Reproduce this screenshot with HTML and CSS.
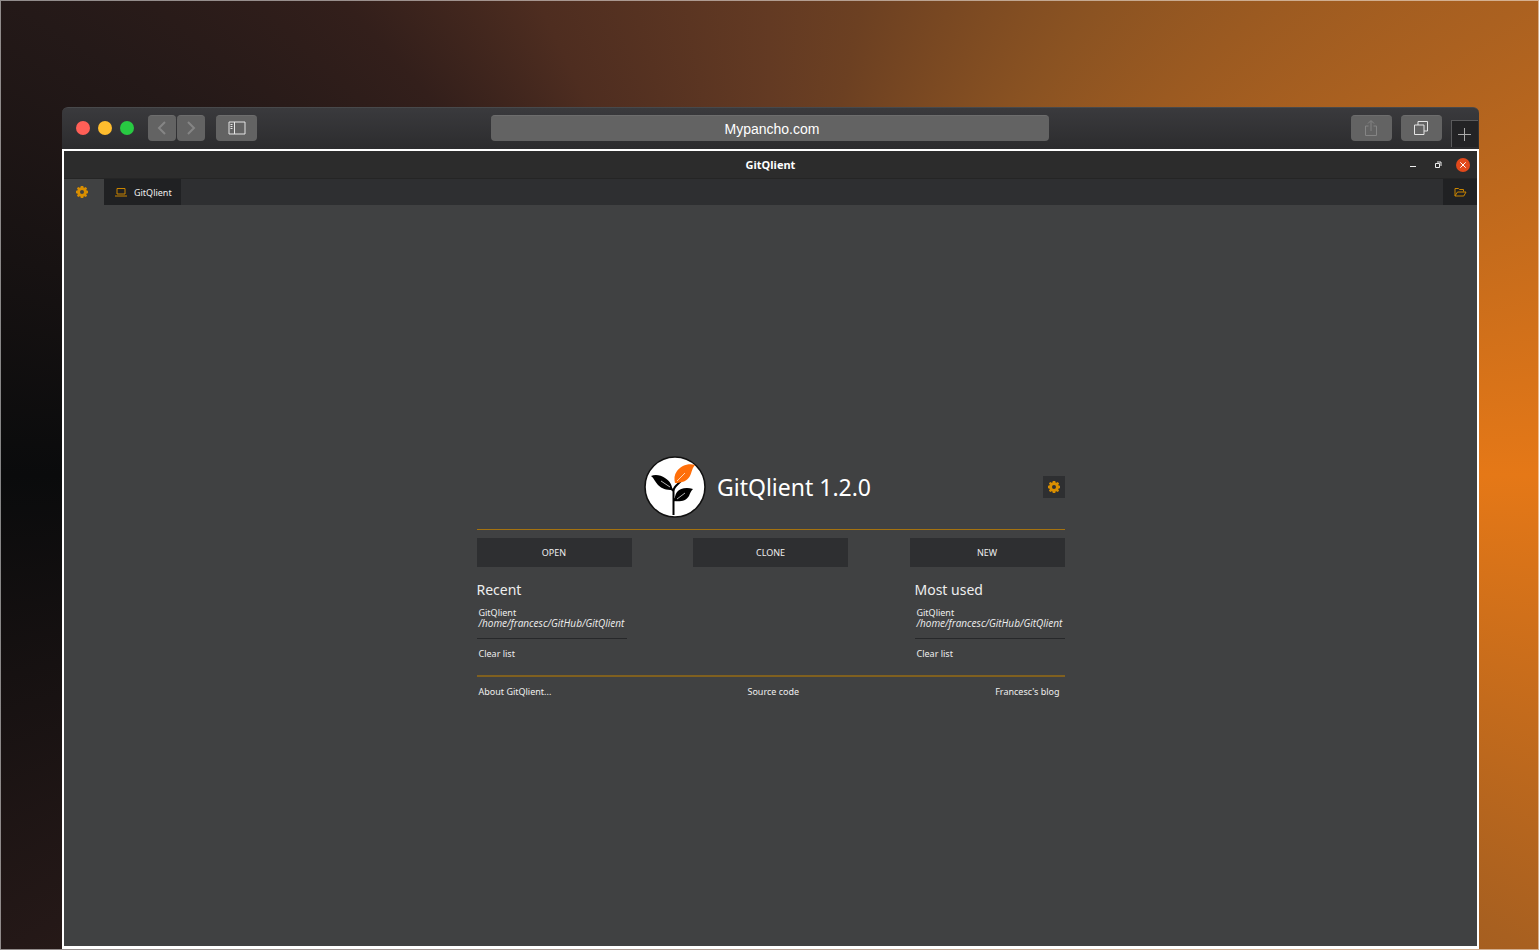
FILE: index.html
```html
<!DOCTYPE html>
<html lang="en">
<head>
<meta charset="utf-8">
<meta name="viewport" content="width=device-width, initial-scale=1">
<title>GitQlient</title>
<link rel="stylesheet" href="styles.css">
</head>
<body>
<svg class="defs" aria-hidden="true">
  <symbol id="gear" viewBox="0 0 24 24">
    <path fill-rule="evenodd" d="M9.500 0h5l.6 3 1.700.7L19.400 2l2.800 2.800L20.500 7.300l.7 1.700L24 9.500v5l-2.800.6-.7 1.700 1.700 2.500-2.900 2.900-2.500-1.700-1.700.7L14.500 24h-5l-.6-2.800-1.700-.7-2.500 1.700-2.900-2.900 1.700-2.500-.7-1.700L0 14.500v-5l2.800-.6.7-1.700L1.800 4.700l2.900-2.900 2.500 1.700 1.700-.7zM12 8a4 4 0 1 0 0 8a4 4 0 1 0 0-8z"/>
  </symbol>
</svg>
<div class="browser">
  <header class="toolbar">
    <div class="tools">
      <div class="lights">
        <button class="light red" aria-label="Close window"></button>
        <button class="light yellow" aria-label="Minimize window"></button>
        <button class="light green" aria-label="Zoom window"></button>
      </div>
      <div class="nav">
        <button class="tool narrow" aria-label="Back"><svg width="10" height="14" viewBox="0 0 10 14"><path d="M8 1 2 7l6 6"/></svg></button>
        <button class="tool narrow" aria-label="Forward"><svg width="10" height="14" viewBox="0 0 10 14"><path d="M2 1l6 6-6 6"/></svg></button>
      </div>
      <button class="tool bright" aria-label="Show sidebar"><svg width="18" height="14" viewBox="0 0 18 14"><path d="M1 1h16v12H1zM6.500 1v12M2.500 3.500h2M2.500 5.500h2M2.500 7.500h2"/></svg></button>
    </div>
    <input class="address" type="text" value="Mypancho.com" aria-label="Address">
    <div class="tools end">
      <button class="tool" aria-label="Share"><svg width="14" height="18" viewBox="0 0 14 18"><path d="M4.500 7H1.500v9.500h11V7h-3M7 12V2M4 4.500 7 1.500l3 3"/></svg></button>
      <button class="tool bright" aria-label="Show tabs"><svg width="16" height="16" viewBox="0 0 16 16"><path d="M1.500 5h9.500v9.500H1.500zM5 5V1.500h9.500V11H11"/></svg></button>
      <button class="newtab" aria-label="New tab"><svg width="13" height="13" viewBox="0 0 13 13"><path d="M6.500 0v13M0 6.500h13"/></svg></button>
    </div>
  </header>
  <div class="app">
    <div class="titlebar">
      <h1 class="caption">GitQlient</h1>
      <div class="controls">
        <button class="control" aria-label="Minimize"><svg width="14" height="14" viewBox="0 0 14 14"><path d="M4 8.500h6"/></svg></button>
        <button class="control" aria-label="Restore"><svg width="14" height="14" viewBox="0 0 14 14"><path d="M4.500 5.500h4v4h-4zM6 4h4v4"/></svg></button>
        <button class="control close" aria-label="Close"><svg width="14" height="14" viewBox="0 0 14 14"><path d="M4.300 4.300l5.400 5.400M9.700 4.300 4.300 9.700"/></svg></button>
      </div>
    </div>
    <nav class="tabs">
      <button class="tab settings" aria-label="Settings"><svg class="gear" width="12" height="12"><use href="#gear"/></svg></button>
      <button class="tab repo"><svg width="12" height="10" viewBox="0 0 12 10"><path d="M2 1.500h8v5.500H2zM0 9h12"/></svg>GitQlient</button>
      <button class="tab folder" aria-label="Open repository"><svg width="13" height="10" viewBox="0 0 13 10"><path d="M1 9V1.500h3.500l1 1h4v2M1 9l2.500-4h8.500L9.800 9z"/></svg></button>
    </nav>
    <main class="main">
      <div class="welcome">
        <div class="heading">
          <div class="brand">
            <svg class="logo" width="62" height="62" viewBox="0 0 62 62" aria-hidden="true">
              <circle cx="31" cy="31" r="30" fill="#fff" stroke="#111" stroke-width="1.600"/>
              <path d="M29.500 59V36C29 31 33 29 37 25M29.500 45l6-6M29.500 35l-3-3" fill="none" stroke="#000" stroke-width="2"/>
              <path d="M7 20C11 18 17 19 21 22C26 25 28 29 28.500 34C22 34 18 33 14 29C11 26 10 22 7 20z"/>
              <path d="M49 33C43 31 36 32 33 36C31 39 31 41 30 45C36 46 42 45 45 40C46 37 47 35 49 33z"/>
              <path d="M51 9C44 7 37 10 33 15C30 19 30 23 31 27C38 27 43 25 46 20C48 16 48 12 51 9z" fill="#ff6f0a"/>
              <path d="M17 25l9 6M41 37l-8 6M41 17 33 25" fill="none" stroke="#fff" stroke-width=".7"/>
            </svg>
            <h2 class="name">GitQlient 1.2.0</h2>
          </div>
          <button class="config" aria-label="Configure"><svg class="gear" width="12" height="12"><use href="#gear"/></svg></button>
        </div>
        <div class="actions">
          <button class="action">OPEN</button>
          <button class="action">CLONE</button>
          <button class="action">NEW</button>
        </div>
        <div class="lists">
          <section class="list">
            <h3 class="label">Recent</h3>
            <a class="project" href="#recent">GitQlient<em class="path">/home/francesc/GitHub/GitQlient</em></a>
            <button class="clear">Clear list</button>
          </section>
          <section class="list">
            <h3 class="label">Most used</h3>
            <a class="project" href="#most-used">GitQlient<em class="path">/home/francesc/GitHub/GitQlient</em></a>
            <button class="clear">Clear list</button>
          </section>
        </div>
        <footer class="links">
          <a href="#about">About GitQlient...</a>
          <a href="#source">Source code</a>
          <a href="#blog">Francesc's blog</a>
        </footer>
      </div>
    </main>
  </div>
</div>
</body>
</html>
```

FILE: styles.css
```css
* { box-sizing: border-box; }

body {
  margin: 0;
  min-height: 100vh;
  padding: 106px 59px 0 61px;
  display: flex;
  border: 1px solid rgba(255, 255, 255, .5);
  background: conic-gradient(from 0deg at 50% 50%, #633a23 0deg, #6c4022 11deg, #8b5322 35deg, #ab6120 58deg, #e57817 90deg, #a86020 122deg, #633a23 180deg, #241817 238deg, #0a0b0c 270deg, #241918 302deg, #331f1b 318deg, #4e2d20 334deg, #633a23 360deg) border-box;
  font-family: "Noto Sans", "Open Sans", sans-serif;
  font-size: 9px;
  color: #eee;
}

button, input {
  margin: 0;
  padding: 0;
  border: 0;
  background: none;
  color: inherit;
  font: inherit;
}

a { color: inherit; text-decoration: none; }
h1, h2, h3 { margin: 0; font-weight: 400; }
svg { display: block; fill: none; stroke: currentColor; }
.defs { position: absolute; width: 0; height: 0; }

.browser { flex: 1; display: flex; flex-direction: column; }

.toolbar {
  height: 42px;
  display: grid;
  grid-template-columns: 10fr 13fr 10fr;
  align-items: center;
  padding: 0 1px 2px 0;
  border-top: 1px solid #48494b;
  border-radius: 6px 6px 0 0;
  background: linear-gradient(#3a3a3d, #2c2c2e);
}

.tools { display: flex; align-items: center; gap: 11px; padding-left: 14px; }
.lights { display: flex; gap: 8px; margin-right: 3px; }
.light { width: 14px; height: 14px; border-radius: 50%; }
.red { background: #ff5f57; }
.yellow { background: #ffbd2e; }
.green { background: #28ca42; }
.nav { display: flex; gap: 1px; }

.tool {
  width: 41px;
  height: 26px;
  display: grid;
  place-items: center;
  border-radius: 4px;
  border-top: 1px solid #6d6d6d;
  background: #636363;
  color: #858585;
}
.narrow { width: 28px; }
.bright { color: #e4e4e4; }
.narrow svg { stroke-width: 2; }

.address {
  width: 100%;
  height: 26px;
  padding: 2px 0 0 4px;
  border-radius: 4px;
  border-top: 1px solid #6d6d6d;
  background: #636363;
  color: #fff;
  font: 14px "Liberation Sans", Arial, sans-serif;
  text-align: center;
}

.end { align-self: stretch; justify-content: flex-end; gap: 9px; padding: 0; }

.newtab {
  align-self: flex-end;
  width: 27px;
  height: 27px;
  display: grid;
  place-items: center;
  border: 1px solid #5a5a5c;
  border-width: 1px 0 0 1px;
  background: #232325;
  color: #aaa;
}

.app {
  flex: 1;
  display: flex;
  flex-direction: column;
  border: 2px solid #fff;
  border-bottom-width: 3px;
  background: #404142;
}

.titlebar {
  height: 28px;
  display: grid;
  grid-template-columns: 1fr auto 1fr;
  align-items: center;
  border-bottom: 1px solid #252525;
  background: #2c2c2c;
}
.caption { grid-column: 2; font-size: 11px; line-height: 14px; font-weight: 700; color: #fff; }
.controls { display: flex; justify-content: flex-end; gap: 11px; padding-right: 7px; }
.control { width: 14px; height: 14px; border-radius: 50%; }
.close { background: #e2491b; color: #fff; }

.tabs { display: flex; height: 26px; background: #2e2f31; }
.tab { display: flex; align-items: center; justify-content: center; }
.settings { width: 40px; padding-right: 4px; background: #404142; }
.repo { gap: 7px; padding: 0 9px 0 11px; background: #202123; }
.repo svg, .folder svg { color: #c98500; }
.folder { width: 34px; margin-left: auto; background: #202123; }
.gear { fill: #d98e00; stroke: none; }

.main { flex: 1; display: flex; align-items: center; justify-content: center; }
.welcome { width: 588px; max-width: 100%; padding-top: 2px; }

.heading {
  display: flex;
  align-items: center;
  gap: 4px;
  padding-bottom: 11px;
  border-bottom: 1px solid #a5720f;
}
.brand { flex: 1; display: flex; align-items: center; justify-content: center; gap: 11px; }
.logo { fill: #000; stroke: none; }
.name { font-size: 23px; line-height: 30px; color: #fff; }
.config { width: 22px; height: 22px; display: grid; place-items: center; background: #2e2f31; }

.actions { display: flex; justify-content: space-between; padding: 8px 0 14px; }
.action { width: 155px; height: 29px; background: #2e2f31; }

.lists { display: flex; justify-content: space-between; padding-bottom: 15px; border-bottom: 2px solid #80601f; }
.list { width: 150px; }
.label { font-size: 14px; line-height: 18px; }
.project {
  display: block;
  padding: 8px 2px 9px;
  border-bottom: 1px solid #27282a;
  line-height: 11px;
}
.path { display: block; font-family: "Open Sans", sans-serif; font-size: 10px; white-space: nowrap; }
.clear { padding: 8px 2px 0; line-height: 13px; }
.links { display: flex; justify-content: space-between; padding: 8px 5px 0 2px; line-height: 13px; }
```
